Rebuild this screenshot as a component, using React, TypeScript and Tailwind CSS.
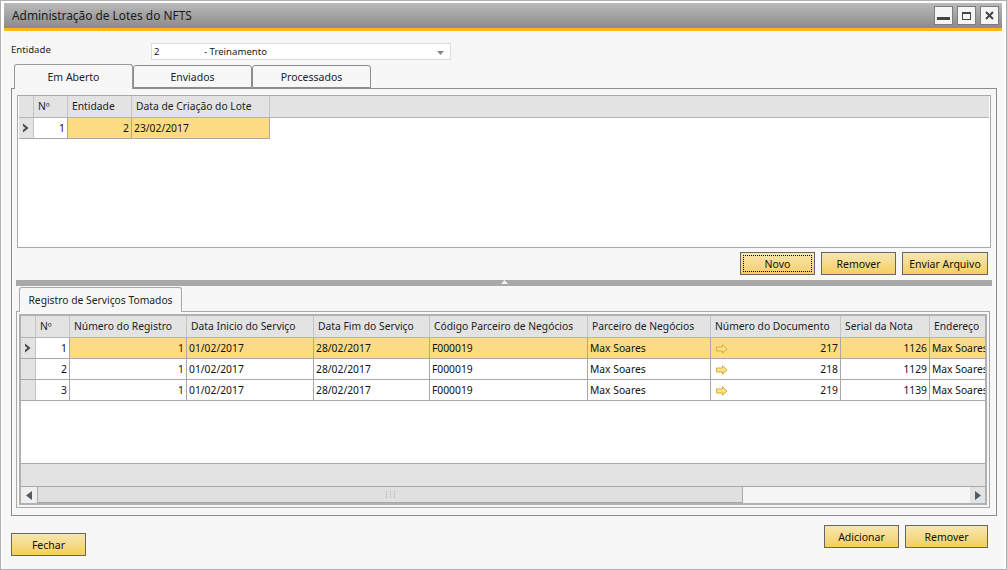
import React from "react";

const font = { fontFamily: '"Noto Sans", "Liberation Sans", sans-serif' };

function Btn({ label, w, focus }: { label: string; w: string; focus?: boolean }) {
  return (
    <button className={`${w} h-[23px] border border-[#666666] bg-gradient-to-b from-[#f6e6b0] to-[#f5cf5c] text-[10.5px] leading-none text-[#111] flex items-center justify-center p-[2px]`}>
      <span className={`w-full h-full pt-px flex items-center justify-center ${focus ? "border border-dotted border-black" : ""}`}>{label}</span>
    </button>
  );
}

function Tab({ label, active }: { label: string; active?: boolean }) {
  return active ? (
    <div className="w-[119px] h-[25px] pt-px -mb-px z-10 bg-[#f7f7f7] border border-b-0 border-[#999] rounded-t-[3px] text-[10.5px] text-[#222] flex items-center justify-center">{label}</div>
  ) : (
    <div className="w-[119px] h-[23px] pt-[2px] bg-[#f7f7f7] border border-[#8c8c8c] rounded-t-[3px] text-[10.5px] text-[#222] flex items-center justify-center">{label}</div>
  );
}

function H({ w, children }: { w: string; children?: React.ReactNode }) {
  return <div className={`${w} shrink-0 h-full pt-px bg-[#e3e3e3] border-r border-[#c4c4c4] px-[4px] flex items-center text-[10.3px] text-[#222] whitespace-nowrap overflow-hidden`}>{children}</div>;
}

function C({ w, children, right, sel }: { w: string; children?: React.ReactNode; right?: boolean; sel?: boolean }) {
  return <div className={`${w} shrink-0 h-full pt-px border-r border-[#a8a8a8] px-[2px] flex items-center text-[10.3px] text-[#111] whitespace-nowrap overflow-hidden ${right ? "justify-end" : ""} ${sel ? "bg-[#fcdb82]" : "bg-white"}`}>{children}</div>;
}

function Arrow() {
  return (
    <svg width="12" height="10" viewBox="0 0 12 10" className="shrink-0">
      <defs>
        <linearGradient id="arrowFill" x1="0" y1="0" x2="0" y2="1">
          <stop offset="0" stopColor="#fff2b0" />
          <stop offset="1" stopColor="#f3d35c" />
        </linearGradient>
      </defs>
      <path d="M0.5 3H6.5V0.8L11 5L6.5 9.2V7H0.5Z" fill="url(#arrowFill)" stroke="#d4ae3c" strokeWidth="1" />
    </svg>
  );
}

function RowHead({ w, sel }: { w: string; sel?: boolean }) {
  return (
    <div className={`${w} shrink-0 h-full bg-[#e3e3e3] border-r border-[#c4c4c4] flex items-center justify-center`}>
      {sel && (
        <svg width="8" height="10" viewBox="0 0 8 10"><path d="M1 0.5L6.5 5L1 9.5V7L3.5 5L1 3Z" fill="#444" /></svg>
      )}
    </div>
  );
}

const cols = ["w-[34px]", "w-[117px]", "w-[127px]", "w-[116px]", "w-[158px]", "w-[123px]", "w-[130px]", "w-[89px]", "w-[56px]"];

function DetailRow({ n, doc, serial, sel }: { n: number; doc: number; serial: number; sel?: boolean }) {
  return (
    <div className="h-[21px] flex border-b border-[#a8a8a8] shrink-0">
      <RowHead w="w-[15px]" sel={sel} />
      <C w={cols[0]} right>{n}</C>
      <C w={cols[1]} right sel={sel}>1</C>
      <C w={cols[2]} sel={sel}>01/02/2017</C>
      <C w={cols[3]} sel={sel}>28/02/2017</C>
      <C w={cols[4]} sel={sel}>F000019</C>
      <C w={cols[5]} sel={sel}>Max Soares</C>
      <C w={cols[6]} sel={sel}>
        <span className="flex w-full items-center justify-between pl-[3px]"><Arrow /><span>{doc}</span></span>
      </C>
      <C w={cols[7]} right sel={sel}>{serial}</C>
      <C w={cols[8]} sel={sel}>Max Soares</C>
    </div>
  );
}

function WinBtn({ children }: { children: React.ReactNode }) {
  return <div className="w-[19px] h-[19px] border border-[#7d7d7d] bg-[#f5f5f5] flex items-center justify-center">{children}</div>;
}

export default function App() {
  return (
    <div style={font} className="w-[1007px] h-[570px] bg-white border border-[#b0b0b0] flex flex-col overflow-hidden pt-[2px] pl-[1px] pr-[2px]">
      <div className="h-[25px] mx-[2px] shrink-0 bg-gradient-to-b from-[#bababa] to-[#8b8b8b] flex items-center justify-between pl-[8px] pr-[3px]">
        <span className="text-[11.9px] text-[#1a1a1a]">Administração de Lotes do NFTS</span>
        <div className="flex gap-[4px]">
          <WinBtn><div className="w-[13px] h-[3px] bg-[#444] mt-[5px]" /></WinBtn>
          <WinBtn><div className="w-[9px] h-[8px] border border-[#444] border-t-2" /></WinBtn>
          <WinBtn>
            <svg width="9" height="9" viewBox="0 0 9 9"><path d="M1 1L8 8M8 1L1 8" stroke="#444" strokeWidth="2" /></svg>
          </WinBtn>
        </div>
      </div>
      <div className="h-[3px] mx-[2px] shrink-0 bg-[#fcb813]" />
      <div className="flex-1 bg-[#f7f7f7] flex flex-col pl-[9px] pr-[7px]">
        <div className="h-[33px] shrink-0 flex items-start pt-[12px]">
          <span className="w-[140px] text-[9.6px] text-[#222] leading-[13px]">Entidade</span>
          <div className="w-[300px] h-[17px] bg-white border border-[#dcdcdc] flex items-center justify-between pl-[2px] pr-[6px] pt-[2px] text-[9.6px] text-[#222]">
            <span className="flex"><span className="w-[50px]">2</span><span>- Treinamento</span></span>
            <svg width="7" height="4" viewBox="0 0 7 4"><path d="M0 0H7L3.5 4Z" fill="#888" /></svg>
          </div>
        </div>
        <div className="flex items-end pl-[3px] h-[24px] shrink-0">
          <Tab label="Em Aberto" active />
          <Tab label="Enviados" />
          <Tab label="Processados" />
        </div>
        <div className="h-[428px] shrink-0 border border-[#8c8c8c] flex flex-col px-[4px] pt-[6px]">
          <div className="h-[153px] shrink-0 mx-px border border-[#a8a8a8] bg-white flex flex-col px-px">
            <div className="h-[22px] flex border-b border-[#b5b5b5] shrink-0 bg-[#e3e3e3]">
              <H w="w-[15px]" />
              <H w="w-[34px]">Nº</H>
              <H w="w-[64px]">Entidade</H>
              <H w="w-[138px]">Data de Criação do Lote</H>
            </div>
            <div className="h-[21px] flex border-b border-[#a8a8a8] w-[251px] shrink-0">
              <RowHead w="w-[15px]" sel />
              <C w="w-[34px]" right>1</C>
              <C w="w-[64px]" right sel>2</C>
              <C w="w-[138px]" sel>23/02/2017</C>
            </div>
          </div>
          <div className="h-[32px] shrink-0 flex items-start justify-end gap-[6px] pt-[4px] pr-[4px]">
            <Btn label="Novo" w="w-[75px]" focus />
            <Btn label="Remover" w="w-[75px]" />
            <Btn label="Enviar Arquivo" w="w-[86px]" />
          </div>
          <div className="h-[6px] shrink-0 bg-[#a8a8a8] flex justify-center items-start">
            <svg width="7" height="4" viewBox="0 0 7 4"><path d="M0 4L3.5 0L7 4Z" fill="#eef2f8" /></svg>
          </div>
          <div className="h-[25px] shrink-0 flex items-end pl-[3px]">
            <div className="w-[163px] h-[25px] pt-px -mb-px z-10 bg-[#f7f7f7] border border-b-0 border-[#a8a8a8] rounded-t-[3px] text-[10.3px] text-[#222] flex items-center justify-center">Registro de Serviços Tomados</div>
          </div>
          <div className="h-[197px] w-[974px] shrink-0 border border-[#a8a8a8] p-[2px] flex flex-col">
            <div className="flex-1 border-2 border-[#b0b0b0] bg-white flex flex-col overflow-hidden">
              <div className="h-[22px] flex border-b border-[#b5b5b5] shrink-0">
                <H w="w-[15px]" />
                <H w={cols[0]}>Nº</H>
                <H w={cols[1]}>Número do Registro</H>
                <H w={cols[2]}>Data Inicio do Serviço</H>
                <H w={cols[3]}>Data Fim do Serviço</H>
                <H w={cols[4]}>Código Parceiro de Negócios</H>
                <H w={cols[5]}>Parceiro de Negócios</H>
                <H w={cols[6]}>Número do Documento</H>
                <H w={cols[7]}>Serial da Nota</H>
                <H w={cols[8]}>Endereço</H>
              </div>
              <DetailRow n={1} doc={217} serial={1126} sel />
              <DetailRow n={2} doc={218} serial={1129} />
              <DetailRow n={3} doc={219} serial={1139} />
              <div className="flex-1" />
              <div className="h-[24px] shrink-0 bg-[#e3e3e3] border-y border-[#a8a8a8]" />
              <div className="h-[16px] shrink-0 bg-[#f5f5f5] flex items-center">
                <div className="w-[17px] h-full bg-[#efefef] border-r border-[#b0b0b0] flex items-center justify-center">
                  <svg width="6" height="9" viewBox="0 0 6 9"><path d="M6 0V9L0 4.5Z" fill="#4f5b66" /></svg>
                </div>
                <div className="w-[705px] h-full bg-[#e0e0e0] border-r border-b border-[#a8a8a8] flex items-center justify-center">
                  <svg width="9" height="7" viewBox="0 0 9 7"><path d="M0 1H1M4 1H5M8 1H9M0 3.5H1M4 3.5H5M8 3.5H9M0 6H1M4 6H5M8 6H9" stroke="#a8a8a8" /></svg>
                </div>
                <div className="flex-1" />
                <div className="w-[15px] h-full bg-[#e3e3e3] flex items-center justify-center">
                  <svg width="6" height="9" viewBox="0 0 6 9"><path d="M0 0V9L6 4.5Z" fill="#4f5b66" /></svg>
                </div>
              </div>
            </div>
          </div>
        </div>
        <div className="flex-1 flex justify-between pr-[9px]">
          <div className="pt-[17px]"><Btn label="Fechar" w="w-[75px]" /></div>
          <div className="pt-[9px] flex gap-[6px]">
            <Btn label="Adicionar" w="w-[75px]" />
            <Btn label="Remover" w="w-[83px]" />
          </div>
        </div>
      </div>
    </div>
  );
}
